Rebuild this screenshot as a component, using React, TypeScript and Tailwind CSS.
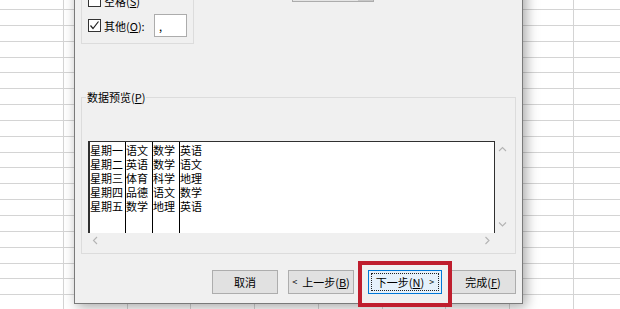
import type { ReactNode } from 'react'

const PREVIEW: string[][] = [
    ['星期一', '星期二', '星期三', '星期四', '星期五'],
    ['语文', '英语', '体育', '品德', '数学'],
    ['数学', '数学', '科学', '语文', '地理'],
    ['英语', '语文', '地理', '数学', '英语'],
]

const COL_WIDTHS = ['w-[36px] border-r border-black', 'w-[27px] border-r border-black', 'w-[27px] border-r border-black', 'flex-1']

function Sheet() {
    const rows = Array.from({ length: 21 })
    const cols = Array.from({ length: 10 })
    return (
        <div className="flex flex-col">
            {rows.map((_, i) => (
                <div key={i} className={`flex shrink-0 border-b border-[#d4d4d4] ${i === 0 ? 'h-[10px]' : 'h-[15.85px]'}`}>
                    {cols.map((_, j) => (
                        <div key={j} className="w-[63.75px] shrink-0 border-r border-[#d4d4d4]" />
                    ))}
                </div>
            ))}
        </div>
    )
}

function CheckBox({ checked }: { checked?: boolean }) {
    return (
        <div className="w-[13px] h-[13px] shrink-0 border border-[#333333] bg-white flex items-center justify-center">
            {checked && (
                <svg width="11" height="11" viewBox="0 0 11 11">
                    <polyline points="1.5,5.5 4,8.5 9.5,1.5" fill="none" stroke="#222" strokeWidth="1.2" />
                </svg>
            )}
        </div>
    )
}

function Chevron({ dir }: { dir: 'up' | 'down' | 'left' | 'right' }) {
    const pts = {
        up: '1,5 4.5,1.5 8,5',
        down: '1,1.5 4.5,5 8,1.5',
        left: '5,1 1.5,4.5 5,8',
        right: '1.5,1 5,4.5 1.5,8',
    }[dir]
    const vertical = dir === 'up' || dir === 'down'
    return (
        <svg width={vertical ? 9 : 7} height={vertical ? 7 : 9} viewBox={vertical ? '0 0 9 7' : '0 0 7 9'}>
            <polyline points={pts} fill="none" stroke="#b4b4b4" strokeWidth="1.1" />
        </svg>
    )
}

function Button({ children, className, focused }: { children: ReactNode; className: string; focused?: boolean }) {
    if (focused) {
        return (
            <div className={`h-[24px] shrink-0 border border-[#0078d7] bg-[#e5f1fb] p-[2px] flex ${className}`}>
                <div className="flex-1 border border-dotted border-[#222] flex items-center justify-center">{children}</div>
            </div>
        )
    }
    return (
        <div className={`h-[24px] shrink-0 border border-[#adadad] bg-[#e1e1e1] flex items-center justify-center ${className}`}>
            {children}
        </div>
    )
}

export default function App() {
    return (
        <div className="relative w-[620px] h-[309px] overflow-hidden bg-white font-['Noto_Sans_CJK_SC','Microsoft_YaHei',sans-serif] text-[11px] leading-[14px] text-black">
            <Sheet />

            {/* 文本导入向导 对话框 */}
            <div className="absolute left-[74px] top-[-30px] w-[449px] h-[334px] border border-[#7a7a7a] bg-[#f0f0f0] shadow-[3px_3px_12px_rgba(0,0,0,0.35)] flex flex-col">
                <div className="flex pt-[4px] pl-[6px]">
                    <div className="w-[113px] h-[69px] shrink-0 border border-[#dcdcdc] flex flex-col justify-end gap-[7px] pl-[6px] pr-[6px] pb-[6px]">
                        <div className="flex items-center h-[13px] gap-[3px]">
                            <CheckBox />
                            <span>空格(<span className="underline">S</span>)</span>
                        </div>
                        <div className="flex items-center h-[23px] gap-[3px]">
                            <CheckBox checked />
                            <span>其他(<span className="underline">O</span>):</span>
                            <div className="ml-auto w-[33px] h-[23px] border border-[#acacac] bg-white pl-[4px] flex items-center">,</div>
                        </div>
                    </div>
                    <div className="ml-[98px] mt-[5px] w-[82px] h-[22px] border border-[#acacac] bg-[#e5e5e5] flex justify-end">
                        <div className="w-[15px] h-full bg-[#c8c8c8]" />
                    </div>
                </div>

                <fieldset className="mt-[46px] ml-[6px] w-[435px] border border-[#dcdcdc] pb-[6px]">
                    <legend className="ml-[4px] px-[1px]">数据预览(<span className="underline">P</span>)</legend>
                    <div className="ml-[6px] mt-[37px] w-[422px] h-[106px] grid grid-cols-[407px_15px] grid-rows-[92px_14px]">
                        <div className="bg-white border-t border-l-2 border-r border-[#303030] flex">
                            {PREVIEW.map((col, i) => (
                                <div key={i} className={`shrink-0 flex flex-col pt-[1px] ${COL_WIDTHS[i]}`}>
                                    {col.map((cell, j) => (
                                        <span key={j} className="whitespace-nowrap">{cell}</span>
                                    ))}
                                </div>
                            ))}
                        </div>
                        <div className="flex flex-col items-center justify-between pt-[5px] pb-[5px]">
                            <Chevron dir="up" />
                            <Chevron dir="down" />
                        </div>
                        <div className="flex items-center justify-between px-[4px]">
                            <Chevron dir="left" />
                            <Chevron dir="right" />
                        </div>
                        <div />
                    </div>
                </fieldset>

                <div className="mt-[16px] flex pr-[6px] justify-end">
                    <Button className="w-[66px]">取消</Button>
                    <Button className="w-[66px] ml-[10px] gap-[5px]">
                        <span className="text-[9px]">&lt;</span>
                        <span>上一步(<span className="underline">B</span>)</span>
                    </Button>
                    <Button focused className="w-[74px] ml-[14px]">
                        <span>下一步(<span className="underline">N</span>)</span>
                        <span className="ml-[5px] text-[9px]">&gt;</span>
                    </Button>
                    <Button className="w-[66px] ml-[8px]">完成(<span className="underline">F</span>)</Button>
                </div>
            </div>

            {/* 标注框 */}
            <div className="absolute left-[358px] top-[261px] w-[94px] h-[46px] border-[4px] border-[#bf1e2e]" />
        </div>
    )
}
